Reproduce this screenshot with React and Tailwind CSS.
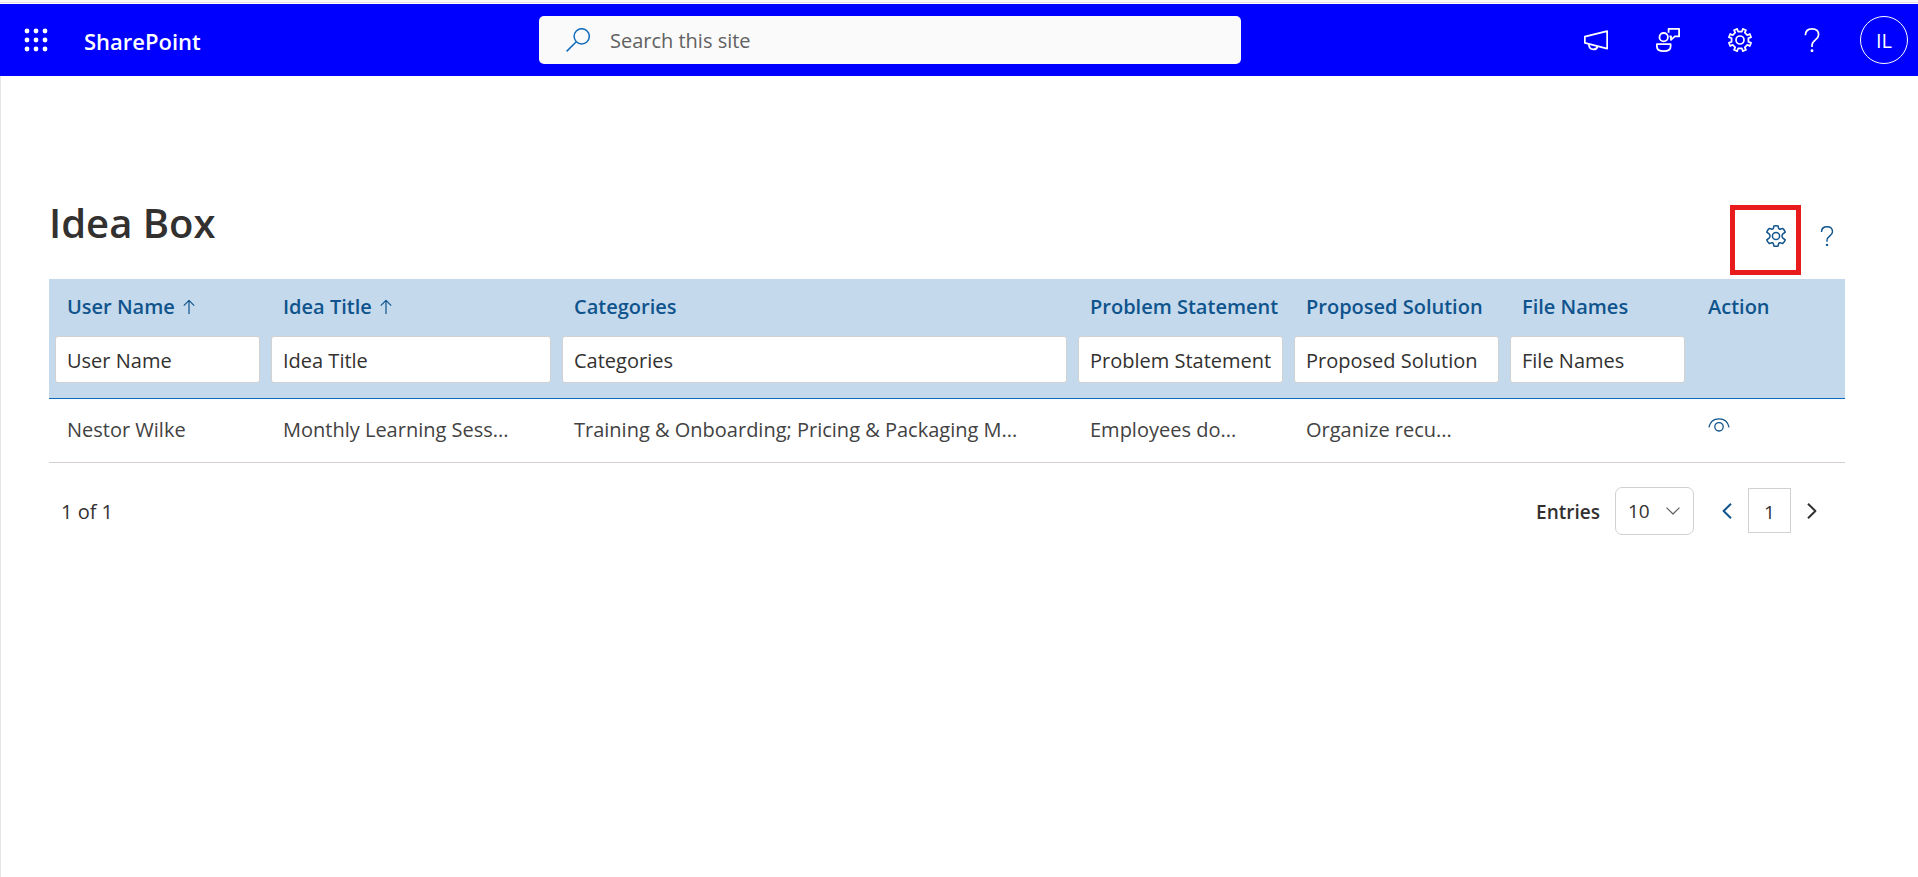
import React, { useState } from "react";

const columns = [
  { key: "user", label: "User Name", sorted: true, width: "w-[216px]" },
  { key: "title", label: "Idea Title", sorted: true, width: "w-[291px]" },
  { key: "categories", label: "Categories", width: "" },
  { key: "problem", label: "Problem Statement", width: "w-[216px]" },
  { key: "solution", label: "Proposed Solution", width: "w-[216px]" },
  { key: "files", label: "File Names", width: "w-[186px]" },
];

const rows = [
  {
    user: "Nestor Wilke",
    title: "Monthly Learning Sess...",
    categories: "Training & Onboarding; Pricing & Packaging M...",
    problem: "Employees do...",
    solution: "Organize recu...",
    files: "",
  },
];

function Svg({ className = "size-6", box = "0 0 24 24", width = 1.5, children }) {
  return (
    <svg
      aria-hidden="true"
      className={className}
      viewBox={box}
      fill="none"
      stroke="currentColor"
      strokeWidth={width}
      strokeLinejoin="round"
    >
      {children}
    </svg>
  );
}

function WaffleIcon() {
  return (
    <svg aria-hidden="true" className="size-6" viewBox="0 0 24 24" fill="currentColor">
      {[3, 12, 21].map((y) =>
        [3, 12, 21].map((x) => <circle key={`${x}-${y}`} cx={x} cy={y} r="2.4" />)
      )}
    </svg>
  );
}

function SearchIcon() {
  return (
    <Svg>
      <circle cx="15.7" cy="8.3" r="7.6" />
      <path d="M10.3 13.7 L0.6 23.4" />
    </Svg>
  );
}

function MegaphoneIcon() {
  return (
    <Svg width={1.8}>
      <path d="M23.2 3.2 V20.6 L0.8 14.8 V8.6 Z" />
      <path d="M4.8 16 C5 19.4 7 21.4 9.4 21.4 C11.6 21.4 13.2 20 13.6 18.2" />
    </Svg>
  );
}

function FeedbackIcon() {
  return (
    <Svg width={1.8}>
      <circle cx="7.7" cy="9.2" r="4.2" />
      <path d="M0.9 16.2 H14.6 V18.4 C14.6 21.6 11.4 23.1 7.7 23.1 C4 23.1 0.9 21.6 0.9 18.4 Z" />
      <path d="M12.6 4.8 V0.9 H23.1 V8.4 H18.8 L15 11.8 V8.4 H13.4" />
    </Svg>
  );
}

function CogIcon() {
  return (
    <Svg width={1.7}>
      <circle cx="12" cy="12" r="4" />
      <path d="M10.1 3.6 L9.2 0.9 L6 2.2 L7.2 4.7 L4.7 7.2 L2.2 6 L0.9 9.2 L3.6 10.1 V13.9 L0.9 14.8 L2.2 18 L4.7 16.8 L7.2 19.3 L6 21.8 L9.2 23.1 L10.1 20.4 H13.9 L14.8 23.1 L18 21.8 L16.8 19.3 L19.3 16.8 L21.8 18 L23.1 14.8 L20.4 13.9 V10.1 L23.1 9.2 L21.8 6 L19.3 7.2 L16.8 4.7 L18 2.2 L14.8 0.9 L13.9 3.6 Z" />
    </Svg>
  );
}

function HelpIcon({ className, width = 1.7 }) {
  return (
    <Svg className={className} width={width}>
      <path d="M5.4 7.2 C5.4 3.2 8 0.9 12 0.9 C16 0.9 18.6 3.2 18.6 6.8 C18.6 12 12 11.8 12 17.4 V19" />
      <circle cx="12" cy="22.7" r="0.6" fill="currentColor" />
    </Svg>
  );
}

function SettingsIcon() {
  return (
    <Svg className="size-[22px]" box="0 0 22 22" width={1.5}>
      <circle cx="11" cy="11" r="3.6" />
      <path d="M8.9 1 Q11 0.5 13.1 1 L13.6 3.3 Q14 4.4 15.2 4.2 L17.6 3.4 Q19.4 5 20.2 7.1 L18.2 8.7 Q17 9.7 17 11 Q17 12.3 18.2 13.3 L20.2 14.9 Q19.4 17 17.6 18.6 L15.2 17.8 Q14 17.6 13.6 18.7 L13.1 21 Q11 21.5 8.9 21 L8.4 18.7 Q8 17.6 6.8 17.8 L4.4 18.6 Q2.6 17 1.8 14.9 L3.8 13.3 Q5 12.3 5 11 Q5 9.7 3.8 8.7 L1.8 7.1 Q2.6 5 4.4 3.4 L6.8 4.2 Q8 4.4 8.4 3.3 Z" />
    </Svg>
  );
}

function SortUpIcon() {
  return (
    <Svg className="h-4 w-3" box="0 0 12 16" width={1.2}>
      <path d="M6 15 V1.5 M0.8 6.6 L6 1.4 L11.2 6.6" />
    </Svg>
  );
}

function ViewIcon() {
  return (
    <Svg className="h-[14px] w-[22px]" box="0 0 22 14" width={1.3}>
      <path d="M0.9 9.4 C2 4 6 0.8 11 0.8 C16 0.8 20 4 21.1 9.4" />
      <circle cx="11" cy="8.8" r="4.2" />
    </Svg>
  );
}

export default function App() {
  const [filters, setFilters] = useState({});
  const [entries, setEntries] = useState("10");

  return (
    <div className="flex min-h-screen flex-col bg-white font-['Open_Sans','Noto_Sans',sans-serif] text-[20px] leading-7 text-[#323130]">
      <div className="h-[3px] border-b border-[#e6e0e6] bg-[#faf6fa]" />
      <header className="mt-px flex h-[72px] items-center bg-[#0000ff] text-white">
        <div className="flex w-[28.1%] items-center gap-9 pl-6">
          <button type="button" aria-label="App launcher">
            <WaffleIcon />
          </button>
          <a href="#home" className="pt-[2px] text-[22px] font-semibold">
            SharePoint
          </a>
        </div>
        <label className="flex h-12 w-[36.6%] items-center gap-5 rounded-[5px] bg-[#fafafa] pl-[27px] text-[#0f6cbd]">
          <SearchIcon />
          <input
            type="search"
            aria-label="Search this site"
            placeholder="Search this site"
            className="min-w-0 flex-1 bg-transparent pt-[2px] text-[#616161] outline-none placeholder:text-[#616161]"
          />
        </label>
        <div className="ml-auto flex items-center gap-12 pr-[10px]">
          <button type="button" aria-label="Announcements">
            <MegaphoneIcon />
          </button>
          <button type="button" aria-label="Feedback">
            <FeedbackIcon />
          </button>
          <button type="button" aria-label="Site settings">
            <CogIcon />
          </button>
          <button type="button" aria-label="Help">
            <HelpIcon />
          </button>
          <button
            type="button"
            aria-label="Account"
            className="-ml-3 size-12 rounded-full border border-white pt-[2px]"
          >
            IL
          </button>
        </div>
      </header>

      <main className="flex-1 border-l border-[#e6e6e6] pt-[119px] pr-[73px] pl-12">
        <div className="flex h-[84px] items-start justify-between">
          <h1 className="text-[40px] leading-[56px] font-semibold">Idea Box</h1>
          <div className="flex items-center gap-[30px] pt-[30px] pr-2 text-[#0f548c]">
            <button type="button" aria-label="Settings" className="relative">
              <SettingsIcon />
              <span className="pointer-events-none absolute -top-5 -right-[14px] h-[70px] w-[71px] border-[5px] border-[#e81c1c]" />
            </button>
            <button type="button" aria-label="Page help">
              <HelpIcon className="size-5" />
            </button>
          </div>
        </div>

        <table className="w-full table-fixed text-left">
          <thead className="border-b border-[#0f6cbd] bg-[#c5d9ec]">
            <tr className="h-[57px] text-[#0f548c]">
              {columns.map((c) => (
                <th key={c.key} scope="col" className={`pb-[2px] pl-[18px] font-semibold whitespace-nowrap ${c.width}`}>
                  <span className="flex items-center gap-2">
                    {c.label}
                    {c.sorted && <SortUpIcon />}
                  </span>
                </th>
              ))}
              <th scope="col" className="w-[155px] pb-[2px] pl-[18px] font-semibold">
                Action
              </th>
            </tr>
            <tr className="h-[62px]">
              {columns.map((c) => (
                <td key={c.key} className="pr-[5px] pl-[6px] align-top">
                  <input
                    type="text"
                    aria-label={`Filter by ${c.label}`}
                    placeholder={c.label}
                    value={filters[c.key] || ""}
                    onChange={(e) => setFilters({ ...filters, [c.key]: e.target.value })}
                    className="block h-[47px] w-full rounded-[3px] border border-[#d1d1d1] bg-white px-[11px] pt-[2px] outline-none placeholder:text-[#323130]"
                  />
                </td>
              ))}
              <td />
            </tr>
          </thead>
          <tbody>
            {rows.map((row) => (
              <tr key={row.user} className="h-16 border-b border-[#d6cfd2] text-[#424242]">
                {columns.map((c) => (
                  <td key={c.key} className="pl-[18px] whitespace-nowrap">
                    {row[c.key]}
                  </td>
                ))}
                <td className="pb-[10px] pl-[18px] text-[#0f548c]">
                  <button type="button" aria-label="View idea" className="block">
                    <ViewIcon />
                  </button>
                </td>
              </tr>
            ))}
          </tbody>
        </table>

        <div className="mt-6 flex h-12 items-center justify-between pr-7 pl-3">
          <span className="pt-[2px]">1 of 1</span>
          <div className="flex items-center">
            <label htmlFor="entries" className="mr-[15px] pt-[2px] text-[19px] font-semibold">
              Entries
            </label>
            <div className="relative mr-7">
              <select
                id="entries"
                value={entries}
                onChange={(e) => setEntries(e.target.value)}
                className="block h-12 w-[79px] appearance-none rounded-[7px] border border-[#d1d1d1] bg-white pl-3 text-[19px] outline-none"
              >
                <option>10</option>
                <option>20</option>
                <option>50</option>
              </select>
              <Svg
                className="pointer-events-none absolute top-5 right-[14px] h-2 w-[14px] text-[#616161]"
                box="0 0 14 8"
                width={1.2}
              >
                <path d="M0.5 0.6 L7 7 L13.5 0.6" />
              </Svg>
            </div>
            <button type="button" aria-label="Previous page" className="text-[#0f548c]">
              <Svg className="h-4 w-[10px]" box="0 0 10 16" width={2}>
                <path d="M9 0.8 L1.6 8 L9 15.2" />
              </Svg>
            </button>
            <button
              type="button"
              aria-current="page"
              className="mx-4 h-[45px] w-[43px] border border-[#d1d1d1] pt-[2px] text-[19px]"
            >
              1
            </button>
            <button type="button" aria-label="Next page">
              <Svg className="h-4 w-[10px]" box="0 0 10 16" width={2}>
                <path d="M1 0.8 L8.4 8 L1 15.2" />
              </Svg>
            </button>
          </div>
        </div>
      </main>
    </div>
  );
}
